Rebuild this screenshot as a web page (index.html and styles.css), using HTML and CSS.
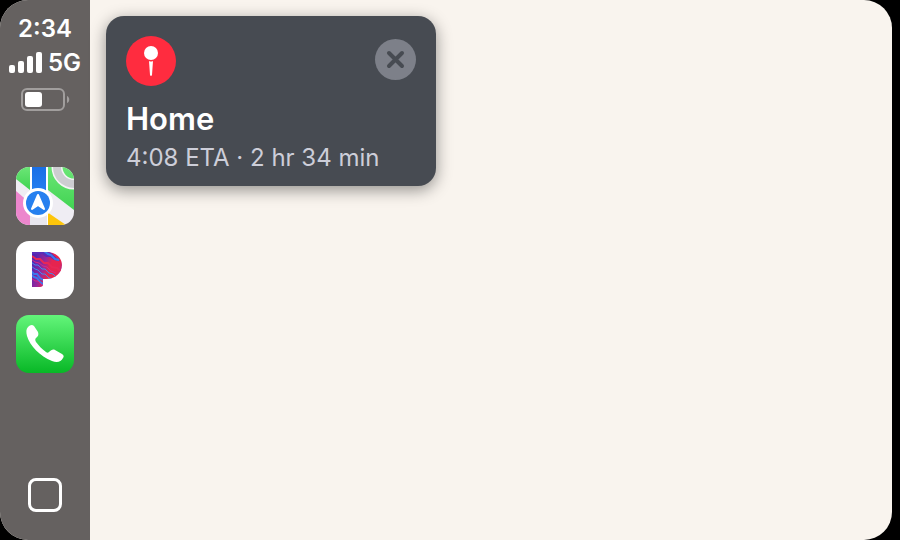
FILE: index.html
```html
<!DOCTYPE html>
<html lang="en">

<head>
    <meta charset="UTF-8">
    <meta name="viewport" content="width=device-width, initial-scale=1.0">
    <title>CarPlay</title>
    <link rel="stylesheet" href="styles.css">
</head>

<body>
    <div class="screen">
        <!-- Sidebar -->
        <aside class="sidebar">
            <div class="status">
                <div class="time">2:34</div>
                <div class="network">
                    <svg class="signal" viewBox="0 0 34 22" aria-hidden="true">
                        <rect x="0" y="13" width="6" height="8" rx="2" />
                        <rect x="9" y="9" width="6" height="12" rx="2" />
                        <rect x="18" y="4" width="6" height="17" rx="2" />
                        <rect x="27" y="0" width="6" height="21" rx="2" />
                    </svg>
                    <span>5G</span>
                </div>
                <svg class="battery" viewBox="0 0 50 24" aria-hidden="true">
                    <rect x="2" y="2" width="42" height="21" rx="5" fill="none" stroke="#a19e9d" stroke-width="2" />
                    <rect x="5" y="5" width="17" height="15" rx="3" fill="#fff" />
                    <path d="M47 9c3 1 3 6 0 7z" fill="#a19e9d" />
                </svg>
            </div>

            <nav class="apps">
                <button class="app" type="button" aria-label="Maps">
                    <svg viewBox="0 0 58 58" aria-hidden="true">
                        <defs>
                            <linearGradient id="park" x1="0" y1="0" x2="0" y2="1">
                                <stop offset="0" stop-color="#6be676" />
                                <stop offset="1" stop-color="#41d352" />
                            </linearGradient>
                            <linearGradient id="road" x1="0" y1="0" x2="0" y2="1">
                                <stop offset="0" stop-color="#1a6fe6" />
                                <stop offset="1" stop-color="#2b86f5" />
                            </linearGradient>
                        </defs>
                        <rect width="58" height="58" fill="#efedf3" />
                        <path d="M0 0h14v23L0 12z" fill="url(#park)" />
                        <path d="M0 24l14 12v22H0z" fill="#ec86cd" />
                        <path d="M32 0h26v43L32 23z" fill="url(#park)" />
                        <path d="M31 45l19 13H31z" fill="#fdc50b" />
                        <circle cx="58" cy="0" r="17" fill="none" stroke="#f4f4f5" stroke-width="11" />
                        <circle cx="58" cy="0" r="17" fill="none" stroke="#cdcdd1" stroke-width="8" />
                        <path d="M14 0h18v58H14z" fill="#fff" />
                        <path d="M16 0h14v36H16z" fill="url(#road)" />
                        <path d="M14 48h17v10H14z" fill="#e9e7ef" />
                        <circle cx="22" cy="36" r="15" fill="#fff" />
                        <circle cx="22" cy="36" r="12" fill="#2680ef" />
                        <path d="M22 28l6 14-6-4-6 4z" fill="#fff" stroke="#fff" stroke-width="2" stroke-linejoin="round" />
                    </svg>
                </button>
                <button class="app" type="button" aria-label="Pandora">
                    <svg viewBox="0 0 58 58" aria-hidden="true">
                        <defs>
                            <linearGradient id="brand" x1="0" y1="0.2" x2="1" y2="0.6">
                                <stop offset="0" stop-color="#4925b5" />
                                <stop offset="0.4" stop-color="#9a2898" />
                                <stop offset="0.6" stop-color="#e6244f" />
                                <stop offset="0.85" stop-color="#e6244f" />
                                <stop offset="1" stop-color="#9930a8" />
                            </linearGradient>
                            <clipPath id="mark">
                                <path d="M16 11h14c10 0 16 6 16 13 0 8-7 14-16 14h-3v5c0 2-1 3-3 3h-8z" />
                            </clipPath>
                        </defs>
                        <rect width="58" height="58" fill="#fff" />
                        <g clip-path="url(#mark)" fill="none" stroke-width="1">
                            <path d="M16 11h30v36H16z" fill="url(#brand)" />
                            <path d="M16 11h18l10 9-6-1-4-3-4 0-4-3-10 0z" fill="#5a2cb8" />
                            <path d="M28 10l4 3 3 1 4 4 4 1M14 29l4 4 3 0 3 4 5 3M14 33l4 3 3 1 3 4 5 3" stroke="#3b79ed" stroke-width="2" />
                            <path d="M15 21l4 3 3 0 4 4 3 0 4 4 4 1 5 5M15 25l4 3 3 1 4 4 3 0 4 4 4 1" stroke="#418bf0" />
                            <path d="M16 15l4 3 4 0 4 4 4 0 4 4 5 1 5 4" stroke="#e82855" stroke-width="2" />
                            <path d="M15 37l4 3 3 0 5 5M15 18l4 3 4 1 4 3 4 1 4 4 5 2" stroke="#d82b84" />
                        </g>
                    </svg>
                </button>
                <button class="app" type="button" aria-label="Phone">
                    <svg viewBox="0 0 58 58" aria-hidden="true">
                        <defs>
                            <linearGradient id="phone" x1="0" y1="0" x2="0" y2="1">
                                <stop offset="0" stop-color="#63f57a" />
                                <stop offset="1" stop-color="#08b826" />
                            </linearGradient>
                        </defs>
                        <rect width="58" height="58" fill="url(#phone)" />
                        <path d="M12 12c2-2 4-3 6-1l4 6c1 3 0 4-2 6-1 1-1 2 0 4 3 4 6 7 10 10 1 1 2 1 3 0 2-2 4-3 6-2l7 4c2 1 2 3 1 4-2 4-6 5-11 3C24 41 14 31 11 21c-1-4-1-7 1-9z" fill="#fff" />
                    </svg>
                </button>
            </nav>

            <button class="home-button" type="button" aria-label="Home screen"></button>
        </aside>

        <!-- Map area -->
        <main class="map">
            <section class="card">
                <div class="card-top">
                    <svg class="pin" viewBox="0 0 50 50" aria-hidden="true">
                        <circle cx="25" cy="25" r="25" fill="#ff2c3f" />
                        <circle cx="25" cy="17" r="7" fill="#fff" />
                        <path d="M23 25q2 1 4 0l-1 14q-1 2-2 0z" fill="#fff" />
                    </svg>
                    <button class="close" type="button" aria-label="Close">
                        <svg viewBox="0 0 41 41" aria-hidden="true">
                            <path d="M14 14l13 13M27 14L14 27" stroke="#474b52" stroke-width="4" stroke-linecap="round" />
                        </svg>
                    </button>
                </div>
                <h1 class="destination">Home</h1>
                <p class="eta">4:08 ETA · 2 hr 34 min</p>
            </section>
        </main>
    </div>
</body>

</html>
```
FILE: styles.css
```css
* {
    margin: 0;
    padding: 0;
    box-sizing: border-box;
}

body {
    font-family: Inter, 'Liberation Sans', sans-serif;
    background: #000;
    padding-right: 8px;
}

button {
    border: none;
    background: none;
    cursor: pointer;
}

svg {
    display: block;
}

.screen {
    display: flex;
    min-height: 100vh;
    border-radius: 28px;
    overflow: hidden;
    background: #f9f4ee;
}

/* Sidebar */
.sidebar {
    display: flex;
    flex-direction: column;
    align-items: center;
    flex: 0 0 90px;
    padding: 14px 0 28px;
    background: #656160;
    color: #fff;
}

.status {
    display: flex;
    flex-direction: column;
    align-items: center;
    gap: 4px;
    font-size: 24px;
    font-weight: 600;
    line-height: 30px;
}

.network {
    display: flex;
    align-items: center;
    gap: 5px;
}

.signal {
    width: 34px;
    height: 22px;
    fill: #fff;
}

.battery {
    width: 50px;
    height: 24px;
    margin-top: 5px;
}

.apps {
    display: flex;
    flex-direction: column;
    gap: 16px;
    margin-top: 56px;
}

.app {
    width: 58px;
    height: 58px;
    border-radius: 13px;
    overflow: hidden;
}

.home-button {
    width: 34px;
    height: 34px;
    margin-top: auto;
    border: 3px solid #fff;
    border-radius: 8px;
}

/* Map area */
.map {
    flex: 1;
    padding: 16px;
}

.card {
    max-width: 330px;
    padding: 20px 20px 9px;
    border-radius: 18px;
    background: #474b52;
    box-shadow: 0 4px 16px rgba(0, 0, 0, 0.42);
}

.card-top {
    display: flex;
    justify-content: space-between;
    align-items: center;
}

.pin {
    width: 50px;
    height: 50px;
}

.close {
    width: 41px;
    height: 41px;
    margin-bottom: 4px;
    border-radius: 50%;
    background: #7d8089;
}

.destination {
    margin-top: 13px;
    color: #fff;
    font-size: 31px;
    font-weight: 600;
    line-height: 40px;
}

.eta {
    color: #cdced9;
    font-size: 24px;
    line-height: 38px;
}
```
